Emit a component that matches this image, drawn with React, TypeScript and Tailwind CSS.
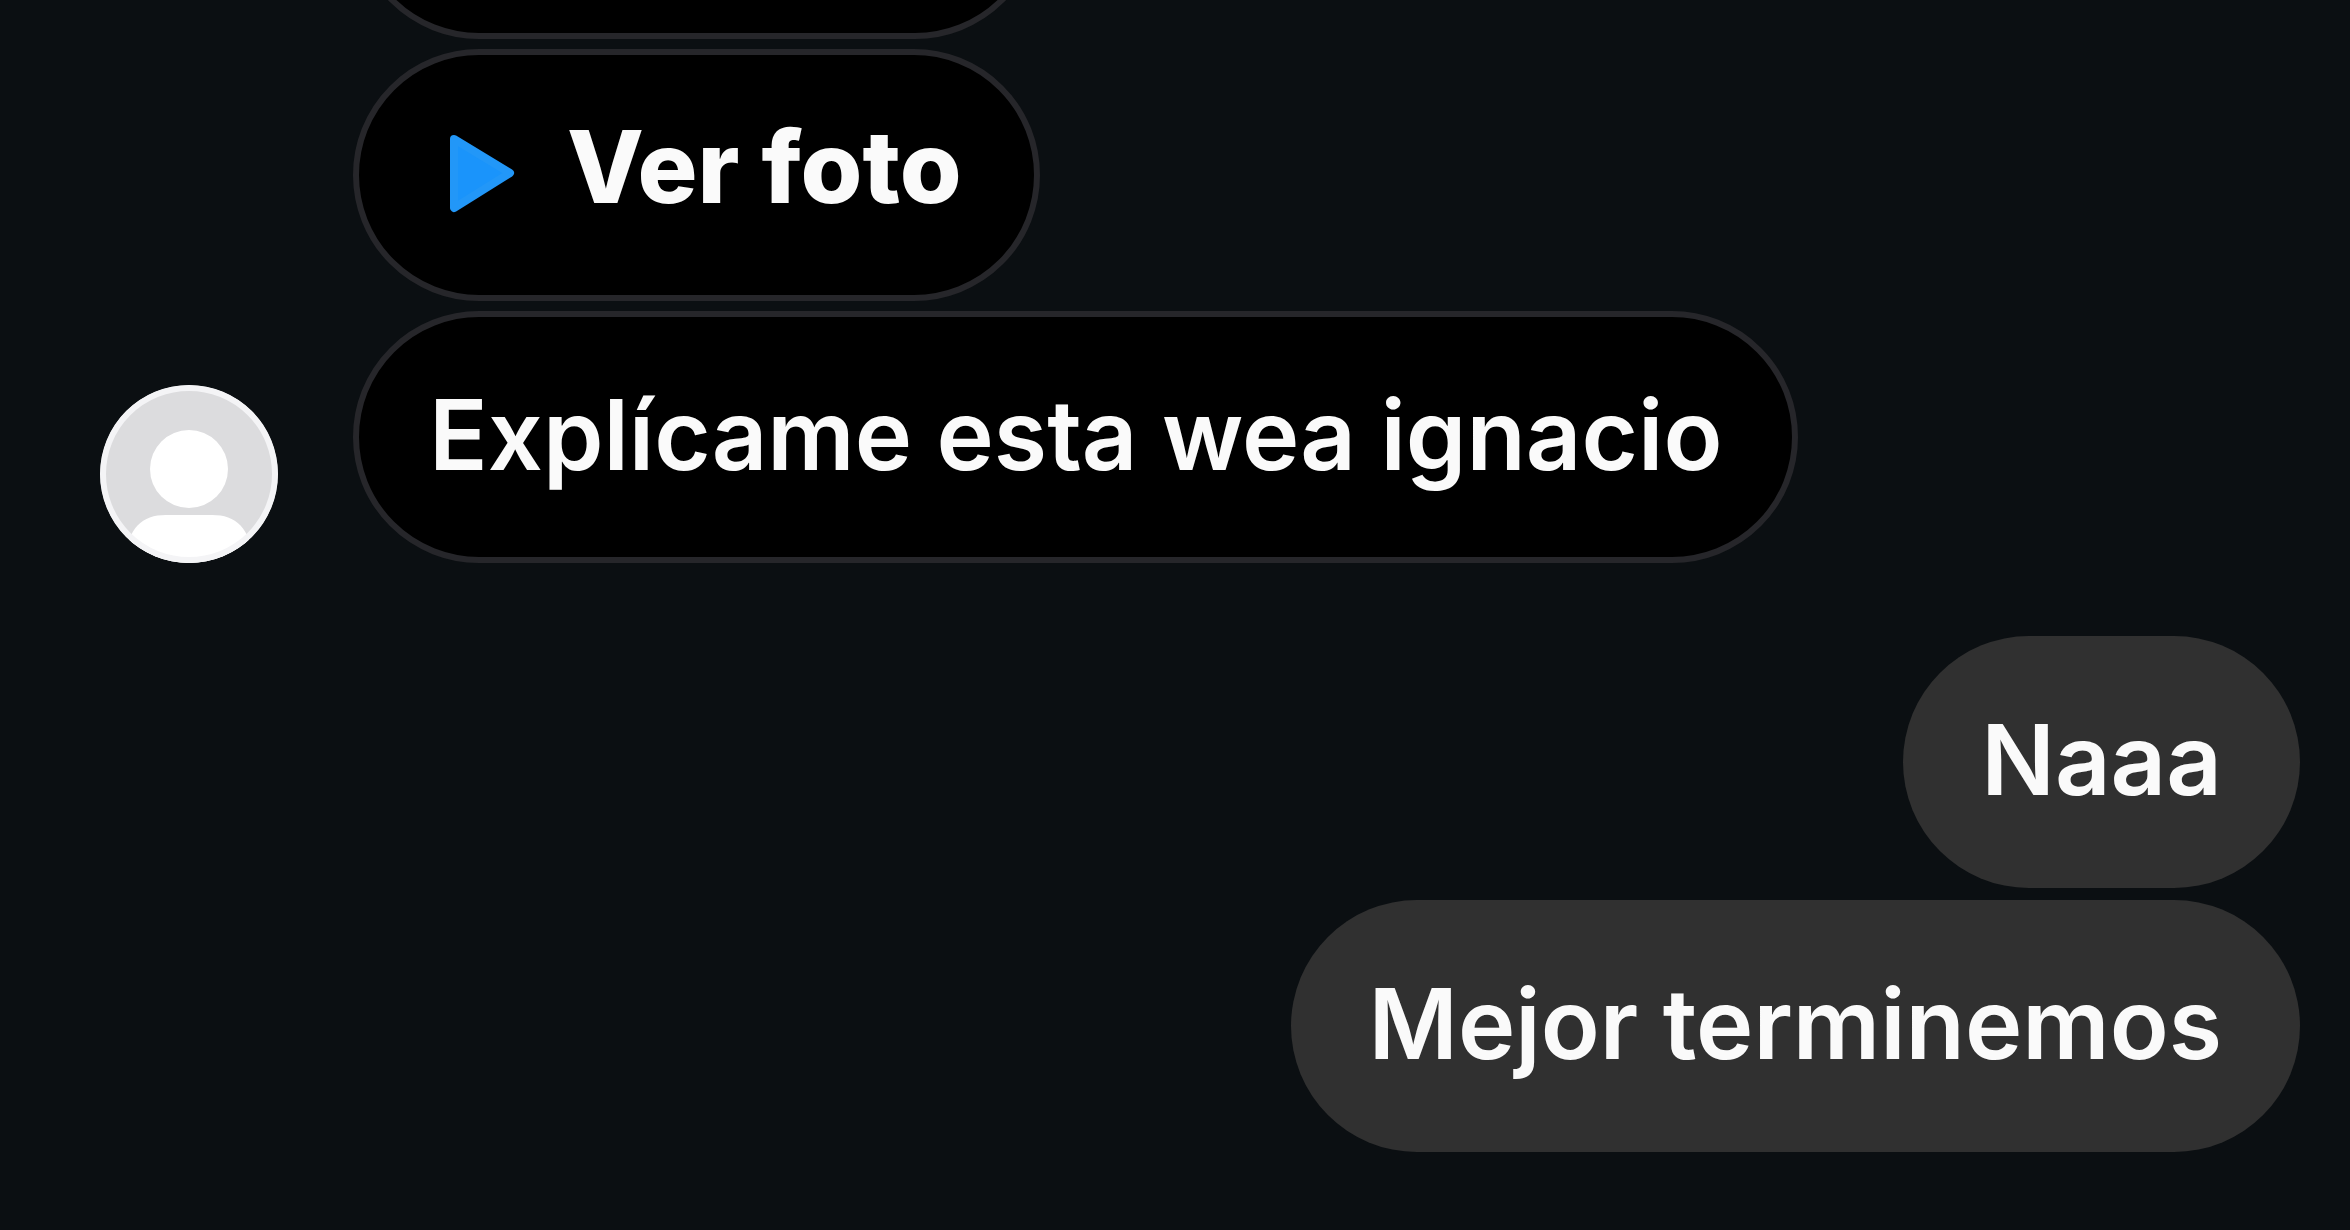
import type { ReactNode } from "react";

const bubble = "flex h-[252px] w-fit items-center rounded-full leading-none";

function Received({ children }: { children: ReactNode }) {
  return (
    <div className={`${bubble} border-[6px] border-[#26262a] bg-black px-[70px] pb-1.5 font-semibold`}>
      {children}
    </div>
  );
}

function Sent({ children }: { children: ReactNode }) {
  return (
    <div className={`${bubble} bg-[#303030] px-[78px] pb-1.5 font-semibold`}>{children}</div>
  );
}

function PhotoButton() {
  return (
    <button
      type="button"
      className={`${bubble} gap-[52px] border-[6px] border-[#26262a] bg-black pr-[72px] pl-[90px] pb-4 text-[100px] font-extrabold`}
    >
      <svg viewBox="0 0 66 80" className="mt-3 h-20 w-[66px]" aria-hidden="true">
        <path
          d="M5 6 L61 40 L5 75 Z"
          fill="#1a94fb"
          stroke="#2297f8"
          strokeWidth="8"
          strokeLinejoin="round"
        />
      </svg>
      Ver foto
    </button>
  );
}

function Avatar() {
  return (
    <svg viewBox="0 0 178 178" className="size-[178px] shrink-0" role="img" aria-label="Avatar">
      <defs>
        <clipPath id="avatar-clip">
          <circle cx="89" cy="89" r="89" />
        </clipPath>
      </defs>
      <g clipPath="url(#avatar-clip)">
        <rect width="178" height="178" fill="#dcdcde" />
        <circle cx="89" cy="84" r="39" fill="#fff" />
        <path d="M24 178 C28 142 42 130 66 130 H112 C136 130 150 142 154 178 Z" fill="#fff" />
        <circle cx="89" cy="89" r="86" fill="none" stroke="#f4f4f6" strokeWidth="6" />
      </g>
    </svg>
  );
}

export default function App() {
  return (
    <main className="flex h-screen flex-col justify-end gap-[73px] overflow-hidden bg-[#0b0f12] pr-[50px] pb-[78px] pl-[100px] font-['Inter',sans-serif] text-[97px] text-[#fafafa]">
      <section className="flex items-end gap-[75px]">
        <Avatar />
        <div className="flex flex-col gap-2.5">
          <div className="h-[252px] w-[688px] rounded-full border-[6px] border-[#26262a] bg-black" />
          <PhotoButton />
          <Received>Explícame esta wea ignacio</Received>
        </div>
      </section>
      <section className="flex flex-col items-end gap-3">
        <Sent>Naaa</Sent>
        <Sent>Mejor terminemos</Sent>
      </section>
    </main>
  );
}
